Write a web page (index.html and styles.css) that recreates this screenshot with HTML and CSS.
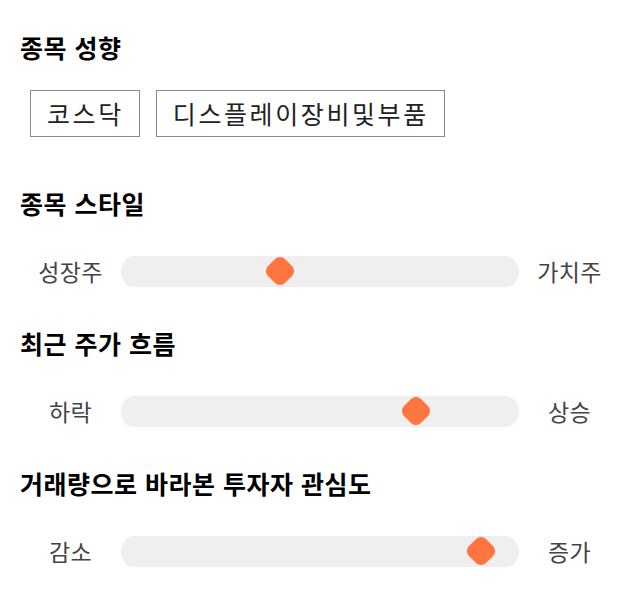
FILE: index.html
```html
<!DOCTYPE html>
<html lang="ko">
<head>
<meta charset="utf-8">
<link rel="stylesheet" href="styles.css">
</head>
<body>
<div class="page">
  <section class="group first">
    <h2 class="title">종목 성향</h2>
    <div class="chips">
      <span class="chip">코스닥</span>
      <span class="chip">디스플레이장비및부품</span>
    </div>
  </section>
  <section class="group">
    <h2 class="title">종목 스타일</h2>
    <div class="slider">
      <span class="label">성장주</span>
      <div class="track"><span class="thumb" style="left: 159px"></span></div>
      <span class="label">가치주</span>
    </div>
  </section>
  <section class="group">
    <h2 class="title">최근 주가 흐름</h2>
    <div class="slider">
      <span class="label">하락</span>
      <div class="track"><span class="thumb" style="left: 295px"></span></div>
      <span class="label">상승</span>
    </div>
  </section>
  <section class="group">
    <h2 class="title">거래량으로 바라본 투자자 관심도</h2>
    <div class="slider">
      <span class="label">감소</span>
      <div class="track"><span class="thumb" style="left: 360px"></span></div>
      <span class="label">증가</span>
    </div>
  </section>
</div>
</body>
</html>
```

FILE: styles.css
```css
* { box-sizing: border-box; }
html, body { margin: 0; padding: 0; background: #fff; }
body {
  font-family: "Noto Sans CJK KR", "Noto Sans", sans-serif;
  color: #000;
}
.page {
  padding: 30px 20px 0 20px;
  display: flex;
  flex-direction: column;
}
.group {
  display: flex;
  flex-direction: column;
  gap: 35px;
  margin-top: 39px;
}
.group.first { margin-top: 0; gap: 26px; }
.group.first + .group { margin-top: 49px; }
.title {
  margin: 0;
  font-size: 25px;
  font-weight: 700;
  letter-spacing: 0.5px;
  line-height: 34px;
  color: #000;
}
.chips {
  display: flex;
  gap: 16px;
  padding-left: 10px;
}
.chip {
  height: 47px;
  border: 1px solid #8a8a8a;
  padding: 0 15px 0 16px;
  font-size: 25px;
  letter-spacing: 2.6px;
  line-height: 45px;
  color: #222;
}
.slider {
  display: flex;
  align-items: center;
  height: 32px;
}
.label {
  width: 101px;
  flex: none;
  text-align: center;
  font-size: 23px;
  letter-spacing: 0.4px;
  color: #444;
  line-height: 32px;
}
.track {
  position: relative;
  width: 398px;
  height: 31px;
  flex: none;
  background: #efefef;
  border-radius: 13px / 50%;
}
.thumb {
  position: absolute;
  top: 50%;
  width: 24px;
  height: 24px;
  margin: -12px 0 0 -12px;
  background: #ff7540;
  border-radius: 7px;
  transform: rotate(45deg);
}
```
